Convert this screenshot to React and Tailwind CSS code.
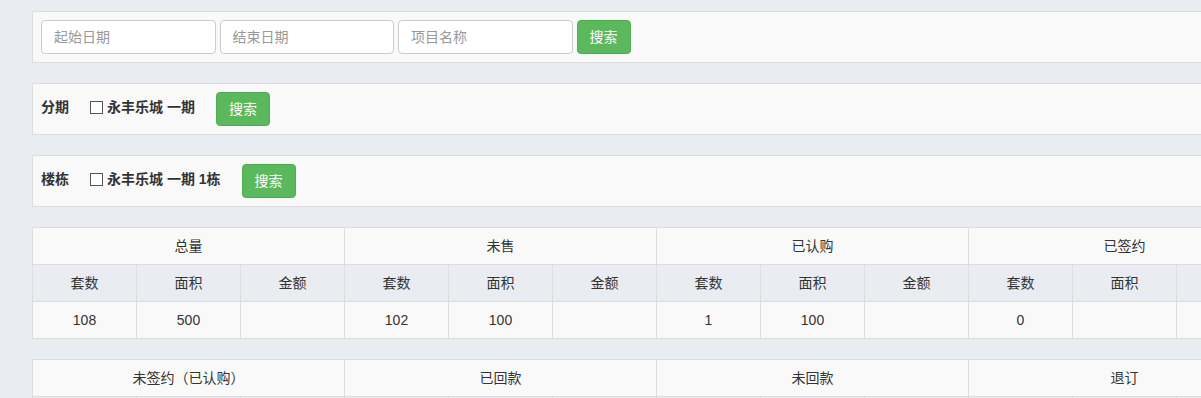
import React from 'react';

const font = "font-['Liberation_Sans','Noto_Sans_CJK_SC',sans-serif]";

const groups1 = ['总量', '未售', '已认购', '已签约', '未签约'];
const values1 = ['108', '500', '', '102', '100', '', '1', '100', '', '0', '', '', '', '', ''];
const groups2 = ['未签约（已认购）', '已回款', '未回款', '退订', '合计'];
const subs = ['套数', '面积', '金额'];

function SearchButton() {
  return (
    <button className="h-[34px] w-[54px] shrink-0 rounded-[4px] border border-[#4cae4c] bg-[#5cb85c] text-[14px] text-white">
      搜索
    </button>
  );
}

function CheckPanel({ label, text }) {
  return (
    <div className="mb-5 flex h-[52px] items-center border border-[#dddddd] bg-[#f9f9f9] px-[8px]">
      <span className="-mt-[3px] w-[28px] text-[14px] font-bold text-[#333]">{label}</span>
      <span className="-mt-[3px] ml-[21px] flex items-center">
        <span className="h-[13px] w-[13px] border border-[#555] bg-white" />
        <span className="ml-[4px] text-[14px] font-bold text-[#333]">{text}</span>
      </span>
      <span className="ml-[21px]">
        <SearchButton />
      </span>
    </div>
  );
}

function StatTable({ groups, values }) {
  return (
    <table className="mb-5 table-fixed border-collapse text-[14px] text-[#333]">
      <tbody>
        <tr className="bg-[#f9f9f9]">
          {groups.map((g) => (
            <td key={g} colSpan={3} className="h-[37px] border border-[#dddddd] text-center">
              {g}
            </td>
          ))}
        </tr>
        <tr className="bg-[#e9edf1]">
          {groups.flatMap((g) =>
            subs.map((s) => (
              <td key={g + s} className="h-[37px] w-[104px] border border-[#dddddd] text-center">
                {s}
              </td>
            ))
          )}
        </tr>
        <tr className="bg-[#f9f9f9]">
          {values.map((v, i) => (
            <td key={i} className="h-[37px] w-[104px] border border-[#dddddd] text-center">
              {v}
            </td>
          ))}
        </tr>
      </tbody>
    </table>
  );
}

export default function App() {
  return (
    <div className={`h-[398px] w-[1201px] overflow-hidden bg-[#e9edf1] ${font}`}>
      <div className="w-[1600px] pl-[32px] pt-[11px]">
        <div className="mb-5 flex h-[52px] items-center gap-[4px] border border-[#dddddd] bg-[#f9f9f9] px-[8px]">
          {['起始日期', '结束日期', '项目名称'].map((p) => (
            <input
              key={p}
              placeholder={p}
              className="h-[34px] w-[174.5px] rounded-[4px] border border-[#cccccc] bg-white px-[12px] text-[14px] text-[#555] placeholder:text-[#999]"
            />
          ))}
          <SearchButton />
        </div>
        <CheckPanel label="分期" text="永丰乐城 一期" />
        <CheckPanel label="楼栋" text="永丰乐城 一期 1栋" />
        <StatTable groups={groups1} values={values1} />
        <StatTable groups={groups2} values={values1.map(() => '')} />
      </div>
    </div>
  );
}
